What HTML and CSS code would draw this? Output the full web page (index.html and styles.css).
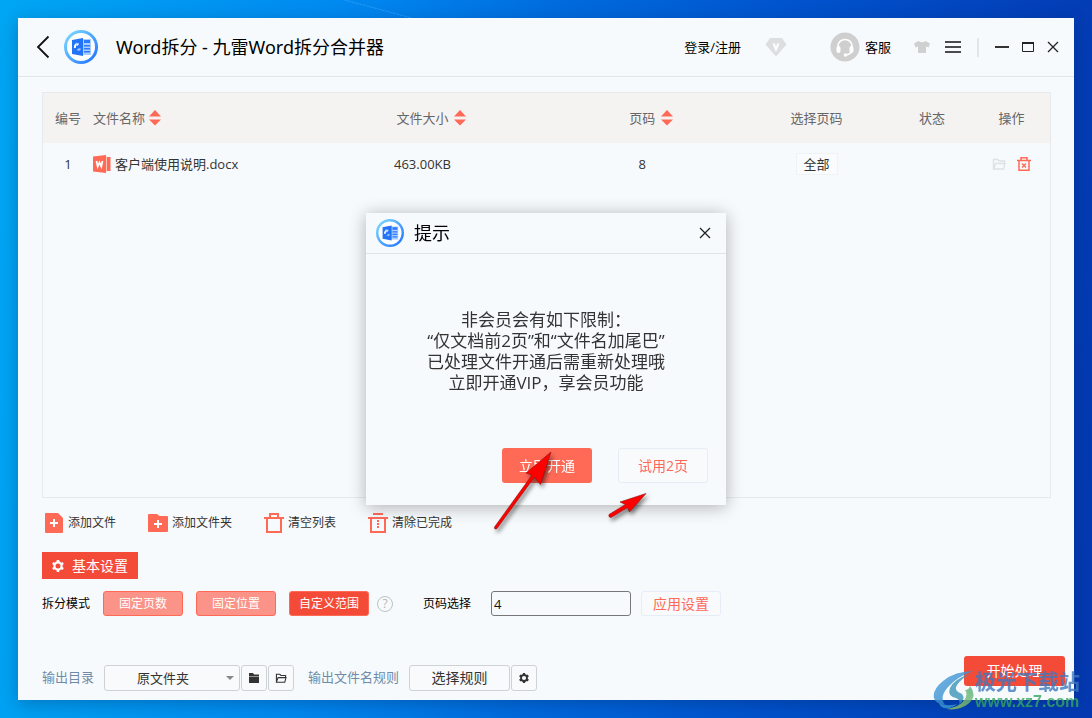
FILE: index.html
```
<!DOCTYPE html>
<html lang="zh-CN">
<head>
    <meta charset="UTF-8">
    <meta name="viewport" content="width=device-width, initial-scale=1.0">
    <title>Word拆分 - 九雷Word拆分合并器</title>
    <link rel="stylesheet" href="styles.css">
</head>
<body>
    <svg class="icon-defs" aria-hidden="true">
        <defs>
            <linearGradient id="ring" x1="0" y1="0" x2="1" y2="1">
                <stop offset="0" stop-color="#7fdcff"/>
                <stop offset="1" stop-color="#1f74ff"/>
            </linearGradient>
            <linearGradient id="swirl" x1="0" y1="0" x2="1" y2="1">
                <stop offset="0" stop-color="#4aa3e0"/>
                <stop offset="1" stop-color="#2c7fc0"/>
            </linearGradient>
            <linearGradient id="swirl-green" x1="1" y1="0" x2="0" y2="1">
                <stop offset="0" stop-color="#4fae83"/>
                <stop offset="1" stop-color="#a5c95a"/>
            </linearGradient>
        </defs>
        <symbol id="logo" viewBox="0 0 34 34">
            <circle cx="17" cy="17" r="15.500" fill="#fff" stroke="url(#ring)" stroke-width="3"/>
            <path d="M18 9h9v16h-9z" fill="#a9cdff"/>
            <path d="M20 10h6v3h-6zM20 15h6v1.500h-6zM20 18h6v1.500h-6zM20 21h6v1.500h-6z" fill="#2b7bff"/>
            <path d="M8 10l11-2v18l-11-2z" fill="#2273f5"/>
            <path d="M14 14a3 3 0 0 0-3 4" fill="none" stroke="#fff" stroke-width="2"/>
            <path d="M12 13l3 1-2 2zM13 20l4-1M15 18v3" fill="#fff" stroke="#a9cdff"/>
        </symbol>
        <symbol id="sort" viewBox="0 0 12 16">
            <path d="M6 0l6 6.500H0zM6 15.500l6-6H0z" fill="#ff6a57"/>
        </symbol>
        <symbol id="gear" viewBox="0 0 12 12">
            <circle cx="6" cy="6" r="3.600" fill="none" stroke="currentColor" stroke-width="2.200"/>
            <path d="M6 0v2M6 10v2M.8 3l1.700 1M9.500 8l1.700 1M.8 9l1.700-1M9.500 4l1.700-1" stroke="currentColor" stroke-width="2.600"/>
        </symbol>
        <symbol id="folder-open" viewBox="0 0 14 12">
            <path d="M1.500 11V1.500h4l1.500 1.500h5.500v2M1.500 11l2-5.500h9.500l-1.500 5.500z" fill="none" stroke="currentColor" stroke-width="1.300"/>
        </symbol>
        <symbol id="close" viewBox="0 0 12 12">
            <path d="M1 1l10 10M11 1L1 11" fill="none" stroke="currentColor" stroke-width="1.300"/>
        </symbol>
    </svg>

    <div class="app-window">
        <header class="title-bar">
            <button type="button" class="icon-btn back-btn" aria-label="返回">
                <svg width="14" height="24" viewBox="0 0 14 24"><path d="M12.500 1.500L2 12l10.500 10.500" fill="none" stroke="#111" stroke-width="1.800"/></svg>
            </button>
            <svg class="app-logo" width="34" height="34"><use href="#logo"/></svg>
            <h1>Word拆分 - 九雷Word拆分合并器</h1>

            <div class="title-actions">
                <a href="#" class="login-link">登录/注册</a>
                <button type="button" class="icon-btn vip-btn" aria-label="VIP">
                    <svg width="22" height="20" viewBox="0 0 22 20"><path d="M5 1h12l4.500 6.500L11 19.500.5 7.500z" fill="#dcdfdf"/><path d="M8.500 6.500l2.500 6 2.500-6" fill="none" stroke="#fff" stroke-width="2"/></svg>
                </button>
                <a href="#" class="service-link">
                    <svg width="30" height="30" viewBox="0 0 30 30">
                        <circle cx="15" cy="15" r="14.500" fill="#cfcfcf"/>
                        <path d="M8 17v-3a7 6.500 0 0 1 14 0v3q0 5-6 6" fill="none" stroke="#fff" stroke-width="1.600"/>
                        <rect x="6.500" y="14" width="4" height="7" rx="2" fill="#fff"/>
                        <rect x="19.500" y="14" width="4" height="7" rx="2" fill="#fff"/>
                        <circle cx="15.500" cy="23" r="1.800" fill="#fff"/>
                    </svg>
                    <span>客服</span>
                </a>
                <button type="button" class="icon-btn skin-btn" aria-label="皮肤">
                    <svg width="18" height="14" viewBox="0 0 18 14"><path d="M5.500 1q3.500 2.500 7 0l4.500 2.500-1.500 4-2.500-1v6.500H5V6.500l-2.500 1-1.500-4z" fill="#cfd1d1"/></svg>
                </button>
                <button type="button" class="icon-btn menu-btn" aria-label="菜单">
                    <svg width="16" height="12" viewBox="0 0 16 12"><path d="M0 1h16M0 6h16M0 11h16" stroke="#111" stroke-width="1.700"/></svg>
                </button>
                <span class="divider"></span>
                <button type="button" class="icon-btn min-btn" aria-label="最小化">
                    <svg width="14" height="12" viewBox="0 0 14 12"><path d="M0 6h14" stroke="#333" stroke-width="2"/></svg>
                </button>
                <button type="button" class="icon-btn max-btn" aria-label="最大化">
                    <svg width="12" height="10" viewBox="0 0 12 10"><path d="M.5 0v9.500h11V0" fill="none" stroke="#222"/><path d="M0 1h12" stroke="#222" stroke-width="2"/></svg>
                </button>
                <button type="button" class="icon-btn" aria-label="关闭">
                    <svg width="12" height="12"><use href="#close"/></svg>
                </button>
            </div>
        </header>

        <main class="main-content">
            <section class="file-list">
                <table>
                    <colgroup>
                        <col class="col-no">
                        <col>
                        <col>
                        <col>
                        <col class="col-range">
                        <col class="col-status">
                        <col class="col-action">
                    </colgroup>
                    <thead>
                        <tr>
                            <th>编号</th>
                            <th class="name-cell"><div class="file-name">文件名称<svg width="12" height="16"><use href="#sort"/></svg></div></th>
                            <th><span class="sortable">文件大小<svg class="sort-icon" width="12" height="16"><use href="#sort"/></svg></span></th>
                            <th><span class="sortable">页码<svg class="sort-icon" width="12" height="16"><use href="#sort"/></svg></span></th>
                            <th>选择页码</th>
                            <th>状态</th>
                            <th>操作</th>
                        </tr>
                    </thead>
                    <tbody>
                        <tr>
                            <td>1</td>
                            <td class="name-cell">
                                <div class="file-name">
                                    <svg width="18" height="18" viewBox="0 0 18 18"><path d="M12 2h5.500v14H12z" fill="#ff6a57"/><path d="M0 1.500L13 0v18L0 16.500z" fill="#ff6a57"/><path d="M13.500 1.500v15" stroke="#ffc4bc"/><path d="M3.500 6l1.200 5.500L6.500 7.500l1.800 4L9.500 6" fill="none" stroke="#fff" stroke-width="1.800"/></svg>
                                    <span>客户端使用说明.docx</span>
                                </div>
                            </td>
                            <td>463.00KB</td>
                            <td>8</td>
                            <td><button type="button" class="range-btn">全部</button></td>
                            <td></td>
                            <td>
                                <div class="row-actions">
                                    <button type="button" class="icon-btn open-btn" aria-label="打开"><svg width="14" height="12"><use href="#folder-open"/></svg></button>
                                    <button type="button" class="icon-btn delete-btn" aria-label="删除">
                                        <svg width="14" height="14" viewBox="0 0 14 14"><path d="M4 3V.7h6V3M0 3.500h14M2 3.500v9.700h10V3.500" fill="none" stroke="currentColor" stroke-width="1.500"/><path d="M5 6.500l4 4M9 6.500l-4 4" stroke="currentColor" stroke-width="1.400"/></svg>
                                    </button>
                                </div>
                            </td>
                        </tr>
                    </tbody>
                </table>
            </section>

            <div class="toolbar">
                <button type="button" class="tool-btn">
                    <svg width="20" height="20" viewBox="0 0 20 20"><path d="M1 1q0-1 1-1h12l5 5v14q0 1-1 1H2q-1 0-1-1z" fill="#ff6a57"/><path d="M10 6v8M6 10h8" stroke="#fff" stroke-width="2"/></svg>
                    添加文件
                </button>
                <button type="button" class="tool-btn">
                    <svg width="20" height="20" viewBox="0 0 20 20"><path d="M0 2q0-1 1-1h8l2.500 2H19q1 0 1 1v14q0 1-1 1H1q-1 0-1-1z" fill="#ff6a57"/><path d="M10 7v8M6 11h8" stroke="#fff" stroke-width="2"/></svg>
                    添加文件夹
                </button>
                <button type="button" class="tool-btn">
                    <svg width="20" height="20" viewBox="0 0 20 20"><path d="M6 5V1h8v4M0 5h20M3 5v14h14V5" fill="none" stroke="#ff6a57" stroke-width="2"/></svg>
                    清空列表
                </button>
                <button type="button" class="tool-btn">
                    <svg width="20" height="20" viewBox="0 0 20 20"><path d="M5 1h10M0 5h20M3 5v14h14V5M10 7v2M10 10v2M10 13v2" fill="none" stroke="#ff6a57" stroke-width="2"/></svg>
                    清除已完成
                </button>
            </div>

            <div class="settings-tab">
                <svg width="12" height="12"><use href="#gear"/></svg>
                <span>基本设置</span>
            </div>

            <form class="split-settings">
                <span class="mode-label">拆分模式</span>
                <div class="mode-buttons">
                    <button type="button" class="mode-btn">固定页数</button>
                    <button type="button" class="mode-btn">固定位置</button>
                    <button type="button" class="mode-btn active">自定义范围</button>
                </div>
                <button type="button" class="icon-btn help-btn" aria-label="帮助">?</button>
                <label for="pageRange">页码选择</label>
                <input type="text" id="pageRange" value="4">
                <button type="button" class="outline-btn apply-btn">应用设置</button>
            </form>
        </main>

        <footer class="output-bar">
            <label for="outputDir">输出目录</label>
            <div class="output-group">
                <div class="select-wrap">
                    <select id="outputDir">
                        <option>原文件夹</option>
                    </select>
                </div>
                <button type="button" class="square-btn" aria-label="选择文件夹">
                    <svg width="12" height="10" viewBox="0 0 12 10"><path d="M1 0h4l1 1.500h5v1.500H1zM1 3.500h10V10H1z" fill="currentColor"/></svg>
                </button>
                <button type="button" class="square-btn" aria-label="打开文件夹"><svg width="12" height="10"><use href="#folder-open"/></svg></button>
            </div>
            <span class="output-label">输出文件名规则</span>
            <div class="output-group">
                <button type="button" class="rule-btn">选择规则</button>
                <button type="button" class="square-btn" aria-label="规则设置"><svg width="10" height="10"><use href="#gear"/></svg></button>
            </div>
            <button type="button" class="start-btn">开始处理</button>
        </footer>
    </div>

    <div class="overlay">
        <div class="dialog" role="dialog" aria-labelledby="dialogTitle">
            <div class="dialog-header">
                <svg width="28" height="28"><use href="#logo"/></svg>
                <h2 id="dialogTitle">提示</h2>
                <button type="button" class="icon-btn" aria-label="关闭"><svg width="12" height="12"><use href="#close"/></svg></button>
            </div>
            <p class="dialog-message">非会员会有如下限制：<br>“仅文档前2页”和“文件名加尾巴”<br>已处理文件开通后需重新处理哦<br>立即开通VIP，享会员功能</p>
            <div class="dialog-buttons">
                <button type="button" class="primary-btn">立即开通</button>
                <button type="button" class="outline-btn trial-btn">试用2页</button>
            </div>
            <!-- Pointers to the two dialog buttons -->
            <svg class="arrows" width="170" height="90" viewBox="0 0 170 90" aria-hidden="true">
                <g fill="#fe0000" stroke="#8e1010" stroke-width=".6">
                    <path d="M3.500 78L41 26 35 24 60 3 49.500 35.500 43.500 28 6 79.500Q3 81 3.500 78z"/>
                    <path d="M118 65.500L134.500 55.500 129 53 155 44.500 138.500 63 136.500 58.500 120 68.500Q117 68 118 65.500z"/>
                </g>
            </svg>
        </div>
    </div>

    <div class="watermark">
        <svg width="42" height="42" viewBox="0 0 42 42" aria-hidden="true">
            <path d="M41 2Q22 2 10 12-1 21 1 29q2 6 11 7-6-8 3-18Q25 7 41 2z" fill="url(#swirl)"/>
            <path d="M37 5Q21 10 17 19q-3 8 6 10 5 2 3 6 7-5 3-10-9-3-5-9 4-6 13-11z" fill="#3a94b8"/>
            <path d="M37 17q8 10-2 18-9 7-22 5 14-2 19-10 3-6 0-9 4 0 5-4z" fill="url(#swirl-green)"/>
            <path d="M6 34q8 4 18 1-5 5-13 4-4-1-5-5z" fill="#3b9ad0"/>
        </svg>
        <div class="watermark-text">
            <span class="watermark-name">极光下载站</span>
            <span class="watermark-url">www.xz7.com</span>
        </div>
    </div>
</body>
</html>
```
FILE: styles.css
```
/* General Styles */
* {
    box-sizing: border-box;
}

body {
    margin: 0;
    min-height: 100vh;
    padding: 18px;
    display: flex;
    font-family: "Open Sans", "Noto Sans CJK SC", sans-serif;
    font-size: 13px;
    line-height: 20px;
    color: #333;
    background:
        linear-gradient(15deg, transparent 49%, rgba(60, 170, 255, 0.5) 50%, transparent 54%) 342px 0 / 70px 18px no-repeat,
        linear-gradient(94deg, #00a6f3 0%, #0089f0 30%, #006add 50%, #0053cd 70%, #0438b0 100%);
}

button,
input,
select {
    font-family: inherit;
    font-size: 13px;
    line-height: 20px;
    color: inherit;
    margin: 0;
    padding: 0;
}

button {
    cursor: pointer;
    white-space: nowrap;
}

svg {
    display: block;
    flex-shrink: 0;
}

.icon-defs {
    position: absolute;
    width: 0;
    height: 0;
}

.icon-btn {
    display: flex;
    align-items: center;
    justify-content: center;
    border: none;
    background: none;
    color: #222;
}

/* Window */
.app-window {
    flex: 1;
    min-width: 0;
    display: flex;
    flex-direction: column;
    background: #f7fafc;
    box-shadow: 0 4px 16px rgba(0, 30, 80, 0.3);
}

/* Title Bar */
.title-bar {
    display: flex;
    align-items: center;
    height: 59px;
    padding: 0 15px 0 18px;
    border-bottom: 1px solid #e2e5e7;
    color: #000;
}

.title-bar h1 {
    margin: 0 0 0 18px;
    font-family: "Noto Sans", "Noto Sans CJK SC", sans-serif;
    font-size: 18px;
    font-weight: normal;
    line-height: 24px;
    white-space: nowrap;
}

.app-logo {
    margin-left: 14px;
}

.title-actions {
    display: flex;
    align-items: center;
    margin-left: auto;
}

.title-actions a {
    color: #000;
    text-decoration: none;
}

.vip-btn {
    margin: 0 43px 0 24px;
}

.service-link {
    display: flex;
    align-items: center;
    gap: 5px;
}

.skin-btn {
    margin: 0 14px 0 22px;
}

.divider {
    width: 2px;
    height: 19px;
    margin: 0 16px;
    background: #e3e5e7;
}

.max-btn {
    margin: 0 13px;
}

/* File List */
.main-content {
    flex: 1;
    display: flex;
    flex-direction: column;
    padding: 15px 23px 0 24px;
}

.file-list {
    flex: 1;
    border: 1px solid #e6eaec;
}

.file-list table {
    width: 100%;
    table-layout: fixed;
    border-collapse: collapse;
}

.col-no {
    width: 50px;
}

.col-range {
    width: 129px;
}

.col-status {
    width: 102px;
}

.col-action {
    width: 67px;
}

.file-list th,
.file-list td {
    padding: 0;
    text-align: center;
    font-weight: normal;
}

.file-list th {
    height: 50px;
    background: #f5f3f2;
    color: #666;
}

.file-list td {
    height: 42px;
}

.file-list th:last-child,
.file-list td:last-child {
    padding-right: 10px;
}

.file-list .name-cell {
    text-align: left;
}

.sortable {
    position: relative;
}

.sortable .sort-icon {
    position: absolute;
    left: 100%;
    top: 1px;
    margin-left: 6px;
}

.file-name {
    display: flex;
    align-items: center;
    gap: 4px;
}

.range-btn {
    width: 42px;
    height: 22px;
    border: 1px solid #f0f3f6;
    background: #fafbfc;
}

.row-actions {
    display: flex;
    align-items: center;
    justify-content: center;
    gap: 11px;
}

.open-btn {
    color: #dde1e2;
}

.delete-btn {
    color: #ff6a57;
}

/* Toolbar */
.toolbar {
    display: flex;
    gap: 32px;
    padding: 15px 2px 0;
}

.tool-btn {
    display: flex;
    align-items: center;
    gap: 4px;
    border: none;
    background: none;
    font-size: 12px;
}

/* Settings */
.settings-tab {
    align-self: flex-start;
    display: flex;
    align-items: center;
    gap: 8px;
    height: 27px;
    margin-top: 19px;
    padding: 0 10px;
    background: #f44b39;
    color: white;
    font-size: 14px;
}

.split-settings {
    display: flex;
    align-items: center;
    height: 25px;
    margin-top: 12px;
    font-size: 12px;
    color: #000;
    white-space: nowrap;
}

.mode-buttons {
    display: flex;
    gap: 13px;
    margin-left: 13px;
}

.mode-btn {
    width: 80px;
    height: 25px;
    border: 1px solid #ff6a57;
    border-radius: 3px;
    background: #fb9388;
    color: white;
    font-size: 12px;
}

.mode-btn.active {
    background: #f44b39;
}

.help-btn {
    width: 16px;
    height: 16px;
    margin: 0 30px 0 8px;
    border: 1px solid #bfc2c4;
    border-radius: 50%;
    color: #b5b8ba;
    font-size: 12px;
    line-height: 14px;
}

.split-settings input {
    width: 140px;
    height: 25px;
    margin: 0 10px 0 20px;
    padding: 0 2px;
    border: 1px solid #777;
    border-radius: 3px;
    background: transparent;
    color: #111;
}

.outline-btn {
    border: 1px solid #e6edf7;
    border-radius: 3px;
    background: #f9fafc;
    color: #ff6a57;
    font-size: 14px;
}

.apply-btn {
    width: 80px;
    height: 25px;
}

/* Output Bar */
.output-bar {
    display: flex;
    align-items: center;
    padding: 40px 9px 9px 24px;
    color: #6f8ba8;
    white-space: nowrap;
}

.output-group {
    display: flex;
    gap: 1px;
    margin: 9px 14px 0 10px;
    color: #333;
}

.output-bar label,
.output-label {
    margin-top: 7px;
}

.select-wrap {
    position: relative;
}

.select-wrap::after {
    content: "";
    position: absolute;
    right: 6px;
    top: 11px;
    border: 4px solid transparent;
    border-top-color: #888;
    pointer-events: none;
}

.output-group select,
.rule-btn,
.square-btn {
    height: 26px;
    border: 1px solid #cfd2d4;
    border-radius: 3px;
    background: #f9fafb;
}

.output-group select {
    width: 136px;
    padding-right: 18px;
    appearance: none;
    text-align: center;
    text-align-last: center;
}

.square-btn {
    display: flex;
    align-items: center;
    justify-content: center;
    width: 26px;
}

.rule-btn {
    width: 101px;
    font-size: 14px;
}

.start-btn {
    width: 101px;
    height: 30px;
    margin-left: auto;
    margin-bottom: 5px;
    border: none;
    border-radius: 3px;
    background: #f44b39;
    color: white;
    font-size: 14px;
}

/* Dialog */
.overlay {
    position: fixed;
    inset: 0;
    display: flex;
    align-items: center;
    justify-content: center;
}

.dialog {
    position: relative;
    width: 360px;
    background: #f7fafc;
    box-shadow: 0 2px 16px rgba(0, 0, 0, 0.3);
}

.dialog-header {
    display: flex;
    align-items: center;
    height: 41px;
    padding: 0 15px 0 10px;
    border-bottom: 1px solid #dfe4e7;
    color: #000;
}

.dialog-header h2 {
    flex: 1;
    margin: 0 0 0 10px;
    font-size: 18px;
    font-weight: normal;
    line-height: 24px;
}

.dialog-message {
    margin: 0;
    padding: 55px 10px;
    font-size: 17px;
    line-height: 21px;
    text-align: center;
}

.dialog-buttons {
    display: flex;
    justify-content: flex-end;
    gap: 26px;
    padding: 0 18px 22px;
}

.primary-btn,
.trial-btn {
    width: 90px;
    height: 35px;
    font-size: 14px;
}

.primary-btn {
    border: none;
    border-radius: 3px;
    background: #ff6a57;
    color: white;
}

.arrows {
    position: absolute;
    left: 125px;
    top: 236px;
    filter: drop-shadow(2px 3px 2px rgba(0, 0, 0, 0.5));
    pointer-events: none;
}

/* Watermark */
.watermark {
    position: fixed;
    right: 12px;
    bottom: 7px;
    display: flex;
    align-items: center;
    opacity: 0.8;
    pointer-events: none;
}

.watermark-text {
    display: flex;
    flex-direction: column;
    font-weight: bold;
    white-space: nowrap;
}

.watermark-name {
    font-size: 21px;
    line-height: 24px;
    color: #3f78bd;
}

.watermark-url {
    font-family: "Liberation Sans", sans-serif;
    font-size: 16px;
    line-height: 18px;
    color: #35a563;
}
```
